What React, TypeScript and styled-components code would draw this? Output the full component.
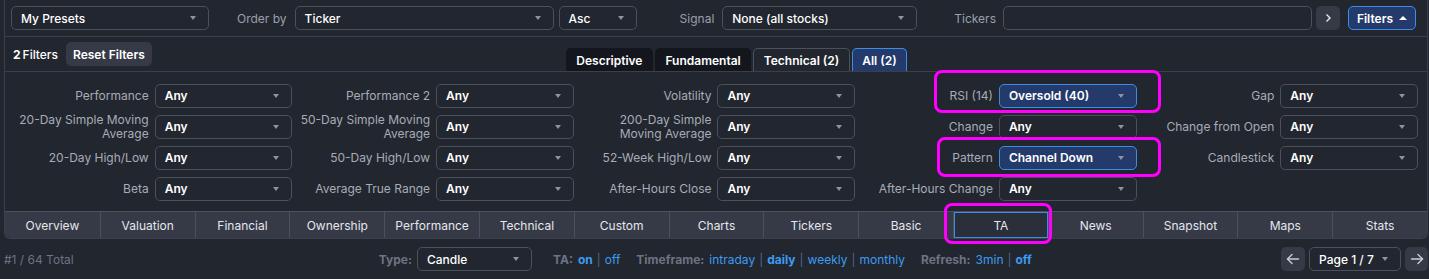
import React from "react";
import styled, { createGlobalStyle, css } from "styled-components";

const C = {
  bg: "#22262f",
  line: "#3a3f4b",
  selBorder: "#4a505d",
  label: "#a7acb7",
  topLabel: "#9aa0ab",
  text: "#f1f3f6",
  blue: "#3b9bf2",
  sep: "#47678f",
  activeBg: "#233a6b",
  activeBorder: "#3a8ee8",
  btnBg: "#363a46",
  darkTab: "#13161d",
  caret: "#8d93a0",
  muted: "#6c7382",
};

const Global = createGlobalStyle`
  html, body { margin: 0; padding: 0; background: ${C.bg}; }
  body {
    font-family: Inter, "Liberation Sans", sans-serif;
    font-size: 12px;
    color: ${C.text};
    -webkit-font-smoothing: antialiased;
  }
  * { box-sizing: border-box; }
`;

const Page = styled.div`
  position: relative;
  width: 1429px;
  height: 279px;
  overflow: hidden;
  background: ${C.bg};
`;

const Panel = styled.div`
  margin-left: 4px;
  width: 1424px;
  border: 1px solid ${C.line};
  border-top: none;
  border-radius: 0 0 6px 6px;
  overflow: hidden;
  display: flex;
  flex-direction: column;
`;

const TopRow = styled.div`
  height: 37px;
  display: flex;
  align-items: center;
  padding-left: 6px;
  border-bottom: 1px solid ${C.line};
`;

const Spaced = css<{ $ml?: number }>`
  margin-left: ${(p) => p.$ml ?? 0}px;
`;

const TopLabel = styled.span<{ $ml?: number }>`
  ${Spaced};
  color: ${C.topLabel};
  font-size: 12px;
  white-space: nowrap;
`;

const SelectBox = styled.div<{ $w?: number; $ml?: number; $active?: boolean; $weight?: number }>`
  ${Spaced};
  flex: none;
  width: ${(p) => (p.$w ? `${p.$w}px` : "100%")};
  height: 24px;
  display: flex;
  align-items: center;
  justify-content: space-between;
  padding: 0 12px 0 9px;
  border: 1px solid ${(p) => (p.$active ? C.activeBorder : C.selBorder)};
  background: ${(p) => (p.$active ? C.activeBg : "transparent")};
  border-radius: 5px;
  color: #ffffff;
  font-weight: ${(p) => p.$weight ?? 500};
  font-size: 12px;
  white-space: nowrap;
`;

const Caret = styled.span`
  width: 0;
  height: 0;
  border-left: 3.5px solid transparent;
  border-right: 3.5px solid transparent;
  border-top: 4px solid ${C.caret};
  flex: none;
`;

const UpCaret = styled.span`
  width: 0;
  height: 0;
  border-left: 4px solid transparent;
  border-right: 4px solid transparent;
  border-bottom: 4px solid #ffffff;
  margin-left: 6px;
`;

const Select: React.FC<{
  value: string;
  w?: number;
  ml?: number;
  active?: boolean;
  weight?: number;
}> = ({ value, w, ml, active, weight }) => (
  <SelectBox $w={w} $ml={ml} $active={active} $weight={weight}>
    <span>{value}</span>
    <Caret />
  </SelectBox>
);

const TextInput = styled.div<{ $w: number; $ml?: number }>`
  ${Spaced};
  width: ${(p) => p.$w}px;
  height: 24px;
  border: 1px solid ${C.selBorder};
  border-radius: 5px;
`;

const IconButton = styled.div<{ $ml?: number; $w?: number }>`
  ${Spaced};
  width: ${(p) => p.$w ?? 24}px;
  height: 24px;
  border-radius: 5px;
  background: ${C.btnBg};
  display: flex;
  align-items: center;
  justify-content: center;
  flex: none;
`;

const FiltersButton = styled.div<{ $ml?: number }>`
  ${Spaced};
  width: 68px;
  height: 24px;
  border-radius: 5px;
  border: 1px solid ${C.activeBorder};
  background: ${C.activeBg};
  color: #ffffff;
  font-weight: 600;
  display: flex;
  align-items: center;
  justify-content: center;
`;

const SecondRow = styled.div`
  height: 35px;
  display: flex;
  align-items: center;
  padding-left: 8px;
  border-bottom: 1px solid ${C.line};
`;

const FilterCount = styled.span`
  font-weight: 500;
  color: #ffffff;
  b { font-weight: 700; margin-right: 2px; }
`;

const ResetButton = styled.div`
  margin-left: 8px;
  height: 24px;
  padding: 0 7px;
  display: flex;
  align-items: center;
  border-radius: 5px;
  background: ${C.btnBg};
  font-weight: 600;
  color: #ffffff;
`;

const TabGroup = styled.div`
  margin-left: 414px;
  align-self: flex-end;
  display: flex;
  gap: 2px;
`;

type TabKind = "dark" | "outline" | "active";

const FilterTab = styled.div<{ $kind: TabKind }>`
  height: 23px;
  padding: 0 9.5px;
  display: flex;
  align-items: center;
  font-weight: 600;
  color: #ffffff;
  border-radius: 5px 5px 0 0;
  ${(p) =>
    p.$kind === "dark"
      ? css`
          background: ${C.darkTab};
          border: 1px solid ${C.darkTab};
          border-bottom: none;
        `
      : p.$kind === "outline"
      ? css`
          background: ${C.bg};
          border: 1px solid ${C.selBorder};
          border-bottom: none;
        `
      : css`
          background: ${C.activeBg};
          border: 1px solid ${C.activeBorder};
          border-bottom: none;
        `}
`;

const FilterGrid = styled.div`
  display: grid;
  grid-template-columns: repeat(5, 1fr);
  grid-auto-rows: 31px;
  padding: 8px 9px 7px 6px;
`;

const FilterCell = styled.div`
  display: grid;
  grid-template-columns: 1fr 1fr;
  column-gap: 6px;
  align-items: center;
`;

const FilterLabel = styled.span`
  text-align: right;
  color: ${C.label};
  font-size: 12px;
  line-height: 14px;
`;

const BottomTabs = styled.div`
  height: 27px;
  display: grid;
  grid-template-columns: repeat(15, 1fr);
  border-top: 1px solid ${C.selBorder};
  background: #363a47;
`;

const ViewTab = styled.div<{ $active?: boolean }>`
  display: flex;
  align-items: center;
  justify-content: center;
  color: #e4e7ec;
  font-size: 12px;
  & + & { border-left: 1px solid ${C.selBorder}; }
  ${(p) =>
    p.$active &&
    css`
      background: #2b2f3a;
      box-shadow: inset 0 0 0 1px ${C.activeBorder};
    `}
`;

const BottomBar = styled.div`
  height: 40px;
  display: flex;
  align-items: center;
  padding: 0 1px 0 4px;
`;

const Total = styled.span`
  color: ${C.muted};
  font-size: 12px;
`;

const CenterGroup = styled.div`
  margin-left: 305px;
  display: flex;
  align-items: center;
`;

const Option = styled.span<{ $ml?: number }>`
  ${Spaced};
  white-space: nowrap;
  font-size: 12px;
`;

const Key = styled.b`
  color: ${C.muted};
  font-weight: 700;
  margin-right: 5px;
`;

const Link = styled.span<{ $bold?: boolean }>`
  color: ${C.blue};
  font-weight: ${(p) => (p.$bold ? 700 : 400)};
`;

const Sep = styled.span`
  color: ${C.sep};
  margin: 0 4px;
`;

const RightGroup = styled.div`
  margin-left: auto;
  display: flex;
  align-items: center;
  gap: 4px;
`;

const Highlight = styled.div<{ $x: number; $y: number; $w: number; $h: number }>`
  position: absolute;
  left: ${(p) => p.$x}px;
  top: ${(p) => p.$y}px;
  width: ${(p) => p.$w}px;
  height: ${(p) => p.$h}px;
  border: 3px solid #ff00ff;
  border-radius: 8px;
  pointer-events: none;
`;

const Chevron = () => (
  <svg width="8" height="10" viewBox="0 0 8 10">
    <polyline points="2.5,1.5 6,5 2.5,8.5" fill="none" stroke="#e8eaee" strokeWidth="1.4" />
  </svg>
);

const Arrow: React.FC<{ dir: "left" | "right" }> = ({ dir }) => (
  <svg width="14" height="12" viewBox="0 0 14 12">
    <g
      fill="none"
      stroke="#c9cdd4"
      strokeWidth="1.4"
      strokeLinecap="round"
      strokeLinejoin="round"
      transform={dir === "right" ? "matrix(-1 0 0 1 14 0)" : undefined}
    >
      <line x1="1.5" y1="6" x2="12.5" y2="6" />
      <polyline points="6,1.5 1.5,6 6,10.5" />
    </g>
  </svg>
);

type Filter = { label: React.ReactNode; value: string; active?: boolean };

const filters: Filter[] = [
  { label: "Performance", value: "Any" },
  { label: "Performance 2", value: "Any" },
  { label: "Volatility", value: "Any" },
  { label: "RSI (14)", value: "Oversold (40)", active: true },
  { label: "Gap", value: "Any" },
  { label: <>20-Day Simple Moving<br />Average</>, value: "Any" },
  { label: <>50-Day Simple Moving<br />Average</>, value: "Any" },
  { label: <>200-Day Simple<br />Moving Average</>, value: "Any" },
  { label: "Change", value: "Any" },
  { label: "Change from Open", value: "Any" },
  { label: "20-Day High/Low", value: "Any" },
  { label: "50-Day High/Low", value: "Any" },
  { label: "52-Week High/Low", value: "Any" },
  { label: "Pattern", value: "Channel Down", active: true },
  { label: "Candlestick", value: "Any" },
  { label: "Beta", value: "Any" },
  { label: "Average True Range", value: "Any" },
  { label: "After-Hours Close", value: "Any" },
  { label: "After-Hours Change", value: "Any" },
];

const views = [
  "Overview", "Valuation", "Financial", "Ownership", "Performance", "Technical", "Custom",
  "Charts", "Tickers", "Basic", "TA", "News", "Snapshot", "Maps", "Stats",
];

export default function App() {
  return (
    <Page>
      <Global />
      <Panel>
        <TopRow>
          <Select value="My Presets" w={198} />
          <TopLabel $ml={28}>Order by</TopLabel>
          <Select value="Ticker" w={259} ml={8} />
          <Select value="Asc" w={78} ml={5} />
          <TopLabel $ml={43}>Signal</TopLabel>
          <Select value="None (all stocks)" w={195} ml={8} />
          <TopLabel $ml={37}>Tickers</TopLabel>
          <TextInput $w={309} $ml={7} />
          <IconButton $ml={4}>
            <Chevron />
          </IconButton>
          <FiltersButton $ml={8}>
            Filters
            <UpCaret />
          </FiltersButton>
        </TopRow>
        <SecondRow>
          <FilterCount>
            <b>2</b>Filters
          </FilterCount>
          <ResetButton>Reset Filters</ResetButton>
          <TabGroup>
            <FilterTab $kind="dark">Descriptive</FilterTab>
            <FilterTab $kind="dark">Fundamental</FilterTab>
            <FilterTab $kind="outline">Technical (2)</FilterTab>
            <FilterTab $kind="active">All (2)</FilterTab>
          </TabGroup>
        </SecondRow>
        <FilterGrid>
          {filters.map((f, i) => (
            <FilterCell key={i}>
              <FilterLabel>{f.label}</FilterLabel>
              <Select value={f.value} active={f.active} weight={600} />
            </FilterCell>
          ))}
        </FilterGrid>
        <BottomTabs>
          {views.map((v) => (
            <ViewTab key={v} $active={v === "TA"}>
              {v}
            </ViewTab>
          ))}
        </BottomTabs>
      </Panel>
      <BottomBar>
        <Total>#1 / 64 Total</Total>
        <CenterGroup>
          <Option>
            <Key>Type:</Key>
          </Option>
          <Select value="Candle" w={115} />
          <Option $ml={21}>
            <Key>TA:</Key>
            <Link $bold>on</Link>
            <Sep>|</Sep>
            <Link>off</Link>
          </Option>
          <Option $ml={16}>
            <Key>Timeframe:</Key>
            <Link>intraday</Link>
            <Sep>|</Sep>
            <Link $bold>daily</Link>
            <Sep>|</Sep>
            <Link>weekly</Link>
            <Sep>|</Sep>
            <Link>monthly</Link>
          </Option>
          <Option $ml={16}>
            <Key>Refresh:</Key>
            <Link>3min</Link>
            <Sep>|</Sep>
            <Link $bold>off</Link>
          </Option>
        </CenterGroup>
        <RightGroup>
          <IconButton>
            <Arrow dir="left" />
          </IconButton>
          <Select value="Page 1 / 7" w={92} />
          <IconButton $w={23}>
            <Arrow dir="right" />
          </IconButton>
        </RightGroup>
      </BottomBar>
      <Highlight $x={934} $y={70} $w={227} $h={43} />
      <Highlight $x={937} $y={137} $w={224} $h={40} />
      <Highlight $x={944} $y={203} $w={108} $h={41} />
    </Page>
  );
}
